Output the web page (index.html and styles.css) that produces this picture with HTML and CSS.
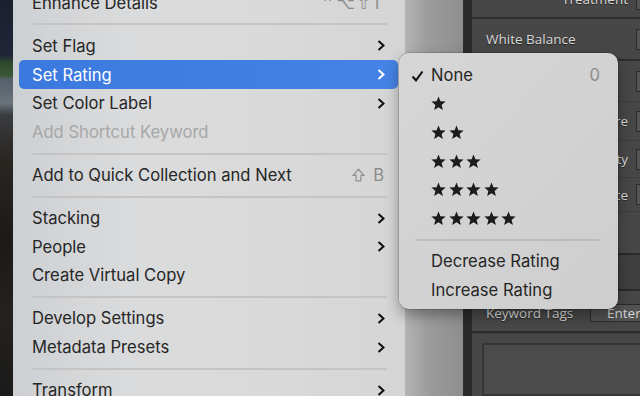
FILE: index.html
```html
<!DOCTYPE html>
<html>
<head>
<meta charset="utf-8">
<link rel="stylesheet" href="styles.css">
</head>
<body>
<div class="stage">
  <div class="photo"></div>
  <div class="menu">
    <div class="item"><span>Enhance Details</span><span class="keys top-keys">⌃⌥⇧T</span></div>
    <div class="sep"></div>
    <div class="item"><span>Set Flag</span><svg class="chev" viewBox="0 0 8 11"><path d="M1.5 1 L6.5 5.5 L1.5 10"/></svg></div>
    <div class="item active"><span>Set Rating</span><svg class="chev" viewBox="0 0 8 11"><path d="M1.5 1 L6.5 5.5 L1.5 10"/></svg></div>
    <div class="item"><span>Set Color Label</span><svg class="chev" viewBox="0 0 8 11"><path d="M1.5 1 L6.5 5.5 L1.5 10"/></svg></div>
    <div class="item disabled"><span>Add Shortcut Keyword</span></div>
    <div class="sep"></div>
    <div class="item"><span>Add to Quick Collection and Next</span><span class="keys"><svg class="shift" viewBox="0 0 12 13"><path d="M6 1 L11 6.8 H8.2 V12 H3.8 V6.8 H1 Z"/></svg><span class="kb">B</span></span></div>
    <div class="sep"></div>
    <div class="item"><span>Stacking</span><svg class="chev" viewBox="0 0 8 11"><path d="M1.5 1 L6.5 5.5 L1.5 10"/></svg></div>
    <div class="item"><span>People</span><svg class="chev" viewBox="0 0 8 11"><path d="M1.5 1 L6.5 5.5 L1.5 10"/></svg></div>
    <div class="item"><span>Create Virtual Copy</span></div>
    <div class="sep"></div>
    <div class="item"><span>Develop Settings</span><svg class="chev" viewBox="0 0 8 11"><path d="M1.5 1 L6.5 5.5 L1.5 10"/></svg></div>
    <div class="item"><span>Metadata Presets</span><svg class="chev" viewBox="0 0 8 11"><path d="M1.5 1 L6.5 5.5 L1.5 10"/></svg></div>
    <div class="sep"></div>
    <div class="item"><span>Transform</span><svg class="chev" viewBox="0 0 8 11"><path d="M1.5 1 L6.5 5.5 L1.5 10"/></svg></div>
  </div>
  <div class="gap"></div>
  <div class="panel">
    <div class="prow h38 right"><span class="plabel">Treatment</span><span class="ctl"></span></div>
    <div class="prow h42"><span class="plabel">White Balance</span><span class="ctl"></span></div>
    <div class="prow h41 right thin"><span class="plabel"></span><span class="ctl"></span></div>
    <div class="prow h39 right thin"><span class="plabel">Exposure</span><span class="ctl"></span></div>
    <div class="prow h37 right thin"><span class="plabel">Clarity</span><span class="ctl"></span></div>
    <div class="prow h34 right thin"><span class="plabel">Vibrance</span><span class="ctl"></span></div>
    <div class="prow h41 right nob"></div>
    <div class="prow h38 dark"></div>
    <div class="prow h42 kw"><span class="plabel">Keyword Tags</span><span class="enter">Enter</span></div>
    <div class="strip"></div>
    <div class="bigbox"></div>
  </div>
</div>
<div class="submenu">
  <div class="sitem"><svg class="check" viewBox="0 0 13 12"><path d="M1.5 6.5 L5 10.3 L11.5 1.5"/></svg><span>None</span><span class="zero">0</span></div>
  <div class="sitem"><span class="stars"><svg viewBox="0 0 24 23"><polygon points="12,0.5 15.06,8.29 23.41,8.79 16.95,14.11 19.05,22.21 12,17.7 4.95,22.21 7.05,14.11 0.59,8.79 8.94,8.29"/></svg></span></div>
  <div class="sitem"><span class="stars"><svg viewBox="0 0 24 23"><polygon points="12,0.5 15.06,8.29 23.41,8.79 16.95,14.11 19.05,22.21 12,17.7 4.95,22.21 7.05,14.11 0.59,8.79 8.94,8.29"/></svg><svg viewBox="0 0 24 23"><polygon points="12,0.5 15.06,8.29 23.41,8.79 16.95,14.11 19.05,22.21 12,17.7 4.95,22.21 7.05,14.11 0.59,8.79 8.94,8.29"/></svg></span></div>
  <div class="sitem"><span class="stars"><svg viewBox="0 0 24 23"><polygon points="12,0.5 15.06,8.29 23.41,8.79 16.95,14.11 19.05,22.21 12,17.7 4.95,22.21 7.05,14.11 0.59,8.79 8.94,8.29"/></svg><svg viewBox="0 0 24 23"><polygon points="12,0.5 15.06,8.29 23.41,8.79 16.95,14.11 19.05,22.21 12,17.7 4.95,22.21 7.05,14.11 0.59,8.79 8.94,8.29"/></svg><svg viewBox="0 0 24 23"><polygon points="12,0.5 15.06,8.29 23.41,8.79 16.95,14.11 19.05,22.21 12,17.7 4.95,22.21 7.05,14.11 0.59,8.79 8.94,8.29"/></svg></span></div>
  <div class="sitem"><span class="stars"><svg viewBox="0 0 24 23"><polygon points="12,0.5 15.06,8.29 23.41,8.79 16.95,14.11 19.05,22.21 12,17.7 4.95,22.21 7.05,14.11 0.59,8.79 8.94,8.29"/></svg><svg viewBox="0 0 24 23"><polygon points="12,0.5 15.06,8.29 23.41,8.79 16.95,14.11 19.05,22.21 12,17.7 4.95,22.21 7.05,14.11 0.59,8.79 8.94,8.29"/></svg><svg viewBox="0 0 24 23"><polygon points="12,0.5 15.06,8.29 23.41,8.79 16.95,14.11 19.05,22.21 12,17.7 4.95,22.21 7.05,14.11 0.59,8.79 8.94,8.29"/></svg><svg viewBox="0 0 24 23"><polygon points="12,0.5 15.06,8.29 23.41,8.79 16.95,14.11 19.05,22.21 12,17.7 4.95,22.21 7.05,14.11 0.59,8.79 8.94,8.29"/></svg></span></div>
  <div class="sitem"><span class="stars"><svg viewBox="0 0 24 23"><polygon points="12,0.5 15.06,8.29 23.41,8.79 16.95,14.11 19.05,22.21 12,17.7 4.95,22.21 7.05,14.11 0.59,8.79 8.94,8.29"/></svg><svg viewBox="0 0 24 23"><polygon points="12,0.5 15.06,8.29 23.41,8.79 16.95,14.11 19.05,22.21 12,17.7 4.95,22.21 7.05,14.11 0.59,8.79 8.94,8.29"/></svg><svg viewBox="0 0 24 23"><polygon points="12,0.5 15.06,8.29 23.41,8.79 16.95,14.11 19.05,22.21 12,17.7 4.95,22.21 7.05,14.11 0.59,8.79 8.94,8.29"/></svg><svg viewBox="0 0 24 23"><polygon points="12,0.5 15.06,8.29 23.41,8.79 16.95,14.11 19.05,22.21 12,17.7 4.95,22.21 7.05,14.11 0.59,8.79 8.94,8.29"/></svg><svg viewBox="0 0 24 23"><polygon points="12,0.5 15.06,8.29 23.41,8.79 16.95,14.11 19.05,22.21 12,17.7 4.95,22.21 7.05,14.11 0.59,8.79 8.94,8.29"/></svg></span></div>
  <div class="ssep"></div>
  <div class="sitem"><span>Decrease Rating</span></div>
  <div class="sitem"><span>Increase Rating</span></div>
</div>
</body>
</html>
```
FILE: styles.css
```css
* { box-sizing: border-box; }
html, body { margin: 0; padding: 0; }
body {
  width: 640px;
  height: 396px;
  overflow: hidden;
  position: relative;
  font-family: Inter, "Liberation Sans", sans-serif;
  background: #464646;
}
.stage {
  display: flex;
  height: 396px;
  overflow: hidden;
}
.photo {
  width: 13px;
  flex: none;
  background: linear-gradient(to bottom, #1b2030 0%, #202638 14%, #2e4a2c 16%, #3a5634 19%, #55606a 20%, #6a737c 26%, #3a3c40 29%, #2a2622 40%, #1c1a18 60%, #24221f 80%, #1a1a1a 100%);
}
.menu {
  width: 392px;
  flex: none;
  margin-top: -11.35px;
  display: flex;
  flex-direction: column;
  background: linear-gradient(to right, #cdd0d3 0%, #dadbdc 30%, #dadada 60%, #d5d5d5 100%);
  font-size: 16.6px;
  color: #262626;
}
.item {
  height: 28.7px;
  flex: none;
  margin: 0 7px 0 6px;
  padding: 0 14px 0 13px;
  display: flex;
  align-items: center;
  justify-content: space-between;
  border-radius: 5px;
  white-space: nowrap;
}
.item.active {
  background: linear-gradient(to right, #3b79de, #4584e6);
  color: #ffffff;
}
.item.disabled { color: #a7a7a7; }
.chev {
  width: 8px;
  height: 11px;
  margin-right: -1px;
  fill: none;
  stroke: #111111;
  stroke-width: 2.1;
}
.active .chev { stroke: #ffffff; }
.keys {
  display: flex;
  align-items: center;
  color: #8c8c8c;
}
.top-keys { font-family: "DejaVu Sans", sans-serif; letter-spacing: 2px; font-size: 16px; }
.shift {
  width: 13px;
  height: 14px;
  fill: none;
  stroke: #8f8f8f;
  stroke-width: 1.1;
  margin-right: 8px;
}
.kb { color: #8c8c8c; }
.sep {
  height: 14.3px;
  flex: none;
  display: flex;
  align-items: center;
  padding: 0 18px 0 19px;
}
.sep::after {
  content: "";
  flex: 1;
  height: 2px;
  background: #c4c4c4;
}
.gap {
  width: 58px;
  flex: none;
  background: linear-gradient(to right, #b4b4b4 0%, #9c9c9c 40%, #8e8e8e 100%);
}
.panel {
  flex: 1;
  min-width: 0;
  overflow: hidden;
  background: #474747;
  border-left: 9px solid #2b2b2b;
  display: flex;
  flex-direction: column;
  margin-top: -19px;
  font-family: "Open Sans", "Liberation Sans", sans-serif;
  font-size: 13.5px;
  color: #d9d9d9;
}
.prow {
  flex: none;
  display: flex;
  align-items: center;
  padding-left: 14px;
  border-bottom: 2px solid #2c2c2c;
  white-space: nowrap;
}
.prow.thin { border-bottom: 1px solid #3e3e3e; }
.prow.nob { border-bottom: none; }
.prow.right { justify-content: flex-end; }
.h34 { height: 34px; }
.h37 { height: 37px; }
.h38 { height: 38px; }
.h39 { height: 39px; }
.h41 { height: 41px; }
.h42 { height: 42px; }
.plabel { text-shadow: 0 1px 1px rgba(0,0,0,0.5); }
.prow:not(.right) .plabel { flex: 1; }
.ctl {
  width: 22px;
  height: 21px;
  flex: none;
  margin-left: 8px;
  margin-right: -18px;
  border: 1px solid #2a2a2a;
  background: #545454;
}
.prow.dark {
  background: #3f3f3f;
  border-top: 2px solid #2a2a2a;
  border-bottom: 2px solid #2a2a2a;
}
.kw { justify-content: space-between; padding-top: 4px; }
.enter {
  width: 60px;
  height: 18px;
  margin-right: -10px;
  padding-left: 16px;
  border: 1px solid #2a2a2a;
  background: #525252;
  line-height: 16px;
  color: #d6d6d6;
}
.strip {
  height: 10px;
  flex: none;
  border-top: 1px solid #3b3b3b;
}
.bigbox {
  flex: 1;
  margin-left: 10px;
  margin-right: -10px;
  border: 2px solid #353535;
  background: #4b4b4b;
}
.submenu {
  position: absolute;
  left: 399px;
  top: 53px;
  width: 219px;
  height: 256px;
  padding-top: 7.65px;
  border-radius: 10px;
  background: linear-gradient(to bottom right, #d6d6d6, #cecece);
  box-shadow: 0 0 0 0.5px rgba(0,0,0,0.25), 0 6px 14px rgba(0,0,0,0.35);
  font-family: Inter, "Liberation Sans", sans-serif;
  font-size: 16.6px;
  color: #262626;
}
.sitem {
  position: relative;
  height: 28.7px;
  padding: 0 18px 0 32px;
  display: flex;
  align-items: center;
  justify-content: space-between;
  white-space: nowrap;
}
.check {
  position: absolute;
  left: 12px;
  top: 9px;
  width: 13px;
  height: 12px;
  fill: none;
  stroke: #111111;
  stroke-width: 2.1;
}
.zero { color: #8c8c8c; }
.stars { display: flex; gap: 2.5px; }
.stars svg { width: 15px; height: 14.5px; fill: #1c1c1c; }
.ssep {
  height: 14.3px;
  display: flex;
  align-items: center;
  padding: 0 17px 0 18px;
}
.ssep::after {
  content: "";
  flex: 1;
  height: 2px;
  background: #bcbcbc;
}
```
